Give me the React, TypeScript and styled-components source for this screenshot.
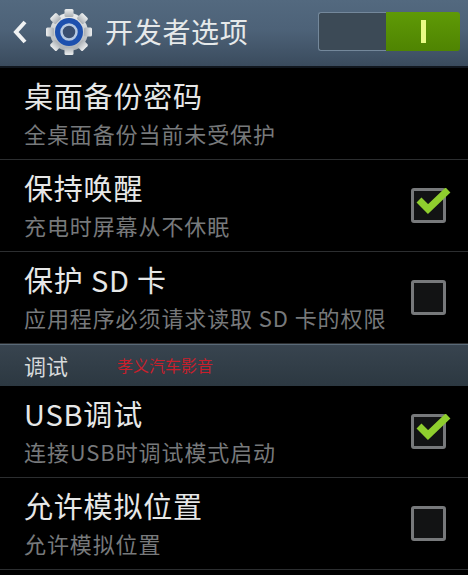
import React from "react";
import styled, { createGlobalStyle } from "styled-components";

const Global = createGlobalStyle`
  html, body { margin: 0; padding: 0; background: #000; }
  body { width: 468px; height: 575px; overflow: hidden; font-family: "Noto Sans CJK SC", "Noto Sans", sans-serif; }
`;

const Page = styled.div`
  width: 468px;
  height: 575px;
  overflow: hidden;
  background: #000;
  display: flex;
  flex-direction: column;
`;

const ActionBar = styled.header`
  height: 68px;
  flex: none;
  box-sizing: border-box;
  background: linear-gradient(#53697f 0%, #4d6278 45%, #3a4b5d 100%);
  display: flex;
  align-items: center;
  padding: 0 8px 3px 12px;
  border-bottom: 2px solid #10161d;
`;

const Title = styled.h1`
  margin: 0 0 2px 12px;
  font-size: 28px;
  font-weight: 400;
  color: #e6e9ea;
  letter-spacing: 0.7px;
  line-height: 36px;
`;

const GearSlot = styled.span`
  display: flex;
  margin-left: 17px;
`;

const Toggle = styled.div`
  margin-left: auto;
  width: 142px;
  height: 39px;
  display: flex;
`;

const ToggleOff = styled.div`
  width: 68px;
  box-sizing: border-box;
  border: 1px solid #74889b;
  border-right: none;
  border-radius: 3px 0 0 3px;
  background: #3c4a56;
`;

const ToggleOn = styled.div`
  flex: 1;
  border-radius: 0 3px 3px 0;
  background: linear-gradient(#5f9a06, #4f8402);
  display: flex;
  align-items: center;
  justify-content: center;
`;

const ToggleMark = styled.span`
  width: 5px;
  height: 23px;
  background: #e9fb86;
`;

const Row = styled.div<{ $h: number }>`
  height: ${(p) => p.$h}px;
  flex: none;
  box-sizing: border-box;
  border-bottom: 1px solid #2c2e30;
  padding-left: 24px;
  display: flex;
  align-items: center;
`;

const RowText = styled.div`
  flex: 1;
  min-width: 0;
  align-self: flex-start;
  padding-top: 7px;
`;

const RowTitle = styled.div`
  font-size: 29px;
  line-height: 40px;
  color: #e6e7e7;
  letter-spacing: 0.8px;
  white-space: nowrap;
`;

const RowSub = styled.div`
  font-size: 22px;
  line-height: 30px;
  margin-top: 3px;
  color: #77797b;
  letter-spacing: 0.9px;
  white-space: nowrap;
`;

const CheckBox = styled.div`
  position: relative;
  flex: none;
  width: 35px;
  height: 35px;
  box-sizing: border-box;
  margin: 0 22px 0 0;
  border: 3px solid #77797b;
  border-radius: 3px;
  background: #121314;
`;

const CheckMark = styled.svg`
  position: absolute;
  left: -3px;
  top: -3px;
  width: 40px;
  height: 34px;
`;

const Section = styled.div`
  height: 42px;
  flex: none;
  box-sizing: border-box;
  border-top: 1px solid #5a6a78;
  background: linear-gradient(#38444f, #2c3841);
  display: flex;
  align-items: center;
  padding: 0 0 2px 24px;
`;

const SectionTitle = styled.span`
  font-size: 22px;
  color: #d7dadc;
`;

const Watermark = styled.span`
  margin-left: 49px;
  font-size: 16px;
  color: #c8202c;
`;

const Gear = () => (
  <svg width="48" height="48" viewBox="0 0 48 48" aria-hidden="true">
    <defs>
      <linearGradient id="gearFill" x1="0" y1="0" x2="0" y2="1">
        <stop offset="0" stopColor="#eceeef" />
        <stop offset="1" stopColor="#a9aeb3" />
      </linearGradient>
    </defs>
    <g fill="url(#gearFill)">
      <circle cx="24" cy="24" r="19" />
      {[0, 45, 90, 135, 180, 225, 270, 315].map((a) => (
        <rect key={a} x="19.5" y="1" width="9" height="8" rx="1.5" transform={`rotate(${a} 24 24)`} />
      ))}
    </g>
    <circle cx="24" cy="24" r="14" fill="#1d50ae" />
    <circle cx="24" cy="24" r="7.5" fill="#3a4f70" stroke="#b6c9e2" strokeWidth="2.5" />
  </svg>
);

const Back = () => (
  <svg width="16" height="24" viewBox="0 0 16 24" aria-hidden="true">
    <path d="M13 2 L4 12 L13 22" fill="none" stroke="#f0f2f3" strokeWidth="4" />
  </svg>
);

const Check = () => (
  <CheckMark viewBox="0 0 40 34" aria-hidden="true">
    <path d="M8 12 L17 21 L37 2" fill="none" stroke="#8fce2e" strokeWidth="7" />
  </CheckMark>
);

const Item = ({ title, sub, h, box, checked }: { title: string; sub: string; h: number; box?: boolean; checked?: boolean }) => (
  <Row $h={h}>
    <RowText>
      <RowTitle>{title}</RowTitle>
      <RowSub>{sub}</RowSub>
    </RowText>
    {box && <CheckBox>{checked && <Check />}</CheckBox>}
  </Row>
);

export default function App() {
  return (
    <Page>
      <Global />
      <ActionBar>
        <Back />
        <GearSlot><Gear /></GearSlot>
        <Title>开发者选项</Title>
        <Toggle>
          <ToggleOff />
          <ToggleOn><ToggleMark /></ToggleOn>
        </Toggle>
      </ActionBar>
      <Item h={92} title="桌面备份密码" sub="全桌面备份当前未受保护" />
      <Item h={92} title="保持唤醒" sub="充电时屏幕从不休眠" box checked />
      <Item h={92} title="保护 SD 卡" sub="应用程序必须请求读取 SD 卡的权限" box />
      <Section>
        <SectionTitle>调试</SectionTitle>
        <Watermark>孝义汽车影音</Watermark>
      </Section>
      <Item h={92} title="USB调试" sub="连接USB时调试模式启动" box checked />
      <Item h={92} title="允许模拟位置" sub="允许模拟位置" box />
    </Page>
  );
}
